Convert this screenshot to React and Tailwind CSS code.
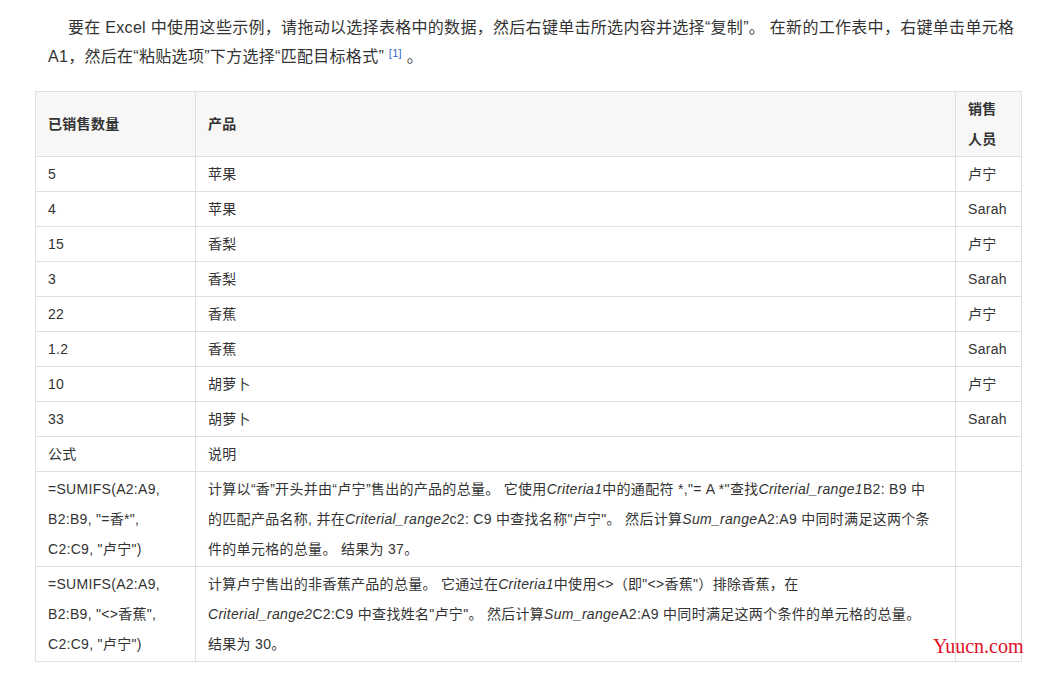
export default function App() {
  const rows = [
    ["5", "苹果", "卢宁"],
    ["4", "苹果", "Sarah"],
    ["15", "香梨", "卢宁"],
    ["3", "香梨", "Sarah"],
    ["22", "香蕉", "卢宁"],
    ["1.2", "香蕉", "Sarah"],
    ["10", "胡萝卜", "卢宁"],
    ["33", "胡萝卜", "Sarah"],
  ];
  const cell = "border border-[#e0e0e0] px-[12px] py-[2px]";
  const td = cell + " align-top";
  return (
    <div className="relative h-[698px] bg-white text-[#333] font-[Liberation_Sans,Noto_Sans_CJK_SC,sans-serif]">
      <p className="pl-[48px] pr-[20px] pt-[13px] text-[16px] leading-[29px] indent-[20px] tracking-[0.3px]">
        要在 Excel 中使用这些示例，请拖动以选择表格中的数据，然后右键单击所选内容并选择“复制”。 在新的工作表中，右键单击单元格 A1，然后在“粘贴选项”下方选择“匹配目标格式”{" "}
        <sup className="text-[#3366cc] text-[11px]">[1]</sup> 。
      </p>
      <table className="mt-[20px] ml-[35px] w-[987px] border-collapse text-[14px] leading-[30px] tracking-[0.3px]">
        <thead>
          <tr className="bg-[#f7f7f7] font-bold text-left">
            <th className={cell + " w-[160px] align-middle"}>已销售数量</th>
            <th className={cell + " align-middle"}>产品</th>
            <th className={cell + " w-[66px] align-top"}>销售人员</th>
          </tr>
        </thead>
        <tbody>
          {rows.map((r, i) => (
            <tr key={i}>
              {r.map((c, j) => (
                <td key={j} className={td}>{c}</td>
              ))}
            </tr>
          ))}
          <tr>
            <td className={td}>公式</td>
            <td className={td}>说明</td>
            <td className={td}></td>
          </tr>
          <tr>
            <td className={td}>=SUMIFS(A2:A9, B2:B9, "=香*", C2:C9, "卢宁")</td>
            <td className={td + " pr-[20px]"}>
              计算以“香”开头并由“卢宁”售出的产品的总量。 它使用<i>Criteria1</i>中的通配符 *,"= A *"查找<i>Criterial_range1</i>B2: B9 中的匹配产品名称, 并在<i>Criterial_range2</i>c2: C9 中查找名称"卢宁"。 然后计算<i>Sum_range</i>A2:A9 中同时满足这两个条件的单元格的总量。 结果为 37。
            </td>
            <td className={td}></td>
          </tr>
          <tr>
            <td className={td}>=SUMIFS(A2:A9, B2:B9, "&lt;&gt;香蕉", C2:C9, "卢宁")</td>
            <td className={td + " pr-[20px]"}>
              计算卢宁售出的非香蕉产品的总量。 它通过在<i>Criteria1</i>中使用&lt;&gt;（即"&lt;&gt;香蕉"）排除香蕉，在<br />
              <i>Criterial_range2</i>C2:C9 中查找姓名"卢宁"。 然后计算<i>Sum_range</i>A2:A9 中同时满足这两个条件的单元格的总量。 结果为 30。
            </td>
            <td className={td}></td>
          </tr>
        </tbody>
      </table>
      <div className="absolute left-[933px] top-[631px] text-[#e0102a] text-[20px] font-[Liberation_Serif,serif]">Yuucn.com</div>
    </div>
  );
}
